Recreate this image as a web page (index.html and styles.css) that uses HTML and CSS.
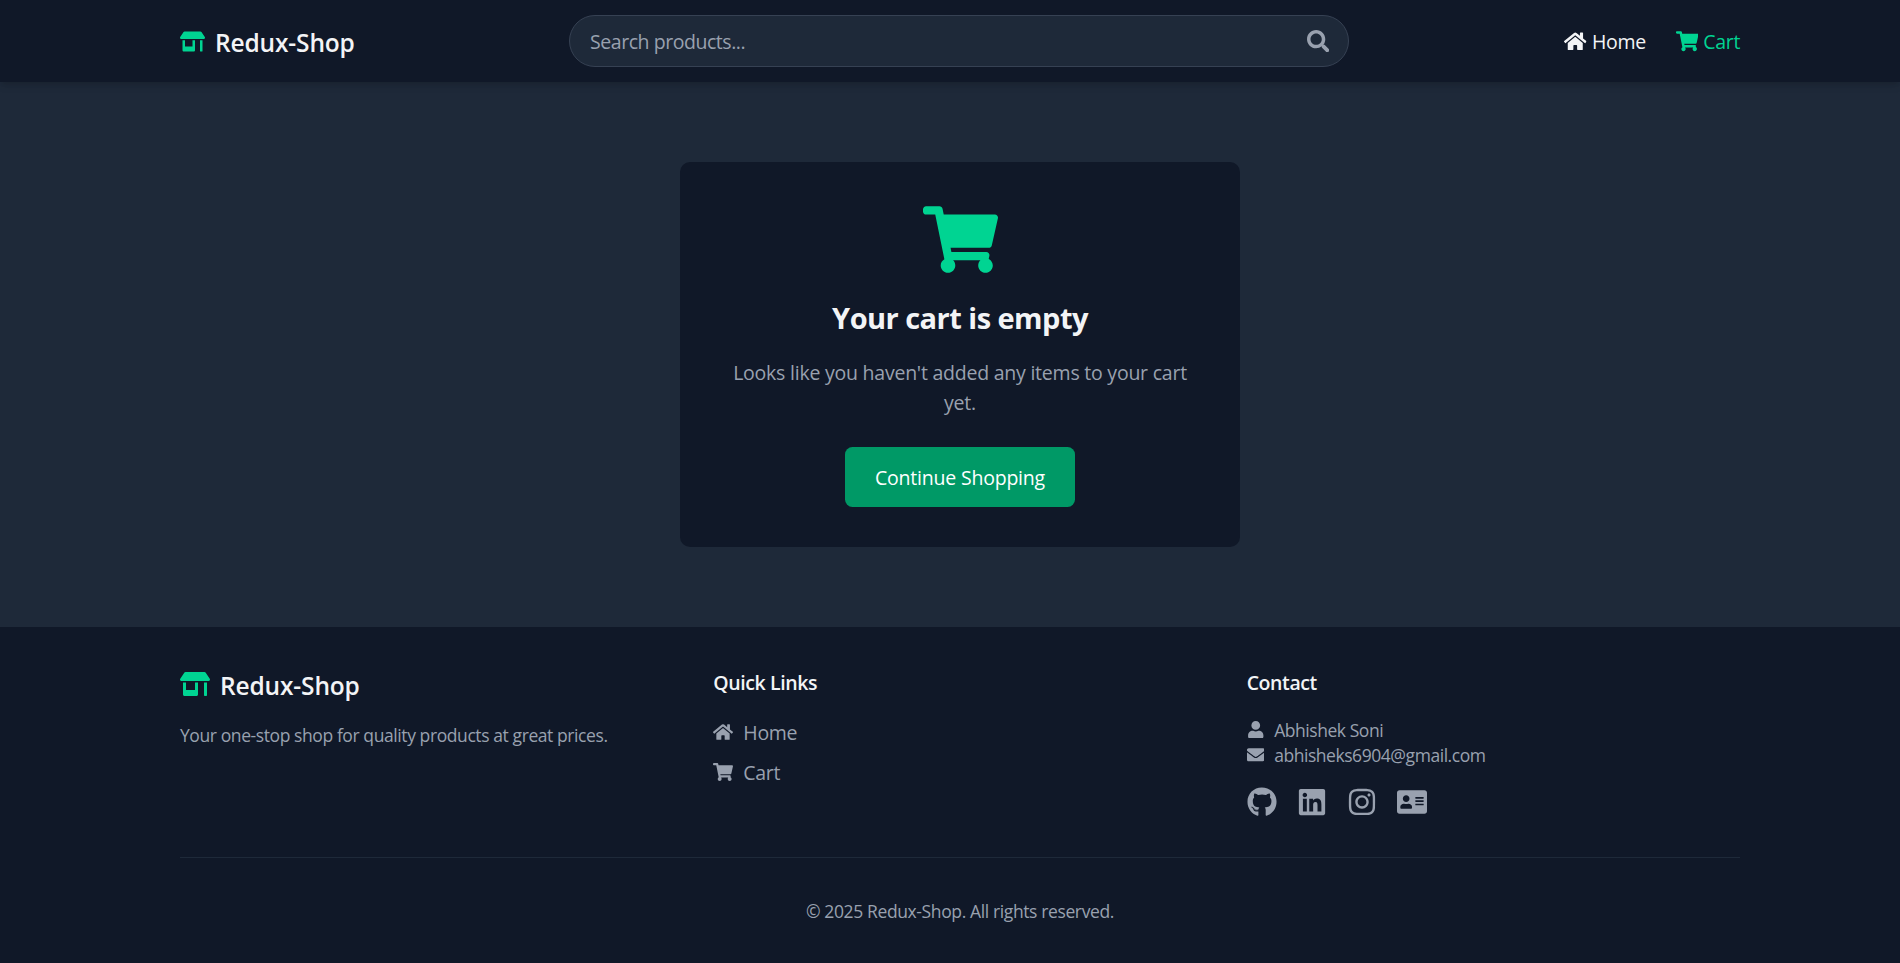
FILE: index.html
```html
<!DOCTYPE html>
<html lang="en">
<head>
<meta charset="utf-8">
<title>Redux-Shop</title>
<link rel="stylesheet" href="styles.css">
</head>
<body>
<svg class="sprite" aria-hidden="true">
  <symbol id="store" viewBox="0 0 640 512"><path d="M320 384H128V224H64v256c0 17.7 14.3 32 32 32h256c17.7 0 32-14.3 32-32V224h-64v160zm314.6-241.8l-85.3-128c-6-8.9-16-14.2-26.7-14.2H117.4c-10.7 0-20.7 5.3-26.6 14.2l-85.3 128c-14.2 21.3 1 49.8 26.6 49.8H608c25.5 0 40.7-28.5 26.6-49.8zM512 496c0 8.8 7.2 16 16 16h32c8.8 0 16-7.2 16-16V224h-64v272z"/></symbol>
  <symbol id="search" viewBox="0 0 512 512"><path d="M505 442.7L405.3 343c-4.5-4.5-10.6-7-17-7H372c27.6-35.3 44-79.7 44-128C416 93.1 322.9 0 208 0S0 93.1 0 208s93.1 208 208 208c48.3 0 92.7-16.4 128-44v16.3c0 6.4 2.5 12.5 7 17l99.7 99.7c9.4 9.4 24.6 9.4 33.9 0l28.3-28.3c9.4-9.4 9.4-24.6.1-34zM208 336c-70.7 0-128-57.2-128-128 0-70.7 57.2-128 128-128 70.7 0 128 57.2 128 128 0 70.7-57.2 128-128 128z"/></symbol>
  <symbol id="home" viewBox="0 0 576 512"><path d="M280.37 148.26L96 300.11V464a16 16 0 0 0 16 16l112.06-.29a16 16 0 0 0 15.92-16V368a16 16 0 0 1 16-16h64a16 16 0 0 1 16 16v95.64a16 16 0 0 0 16 16.05L464 480a16 16 0 0 0 16-16V300L295.67 148.26a12.19 12.19 0 0 0-15.3 0zM571.6 251.47L488 182.56V44.05a12 12 0 0 0-12-12h-56a12 12 0 0 0-12 12v72.61L318.47 43a48 48 0 0 0-61 0L4.34 251.47a12 12 0 0 0-1.6 16.9l25.5 31A12 12 0 0 0 45.15 301l235.22-193.74a12.19 12.19 0 0 1 15.3 0L530.9 301a12 12 0 0 0 16.9-1.6l25.5-31a12 12 0 0 0-1.7-16.93z"/></symbol>
  <symbol id="cart" viewBox="0 0 576 512"><path d="M528.12 301.319l47.273-208C578.806 78.301 567.391 64 551.99 64H159.208l-9.166-44.81C147.758 8.021 137.93 0 126.529 0H24C10.745 0 0 10.745 0 24v16c0 13.255 10.745 24 24 24h69.883l70.248 343.435C147.325 417.1 136 435.222 136 456c0 30.928 25.072 56 56 56s56-25.072 56-56c0-15.674-6.447-29.835-16.824-40h209.647C430.447 426.165 424 440.326 424 456c0 30.928 25.072 56 56 56s56-25.072 56-56c0-22.172-12.888-41.332-31.579-50.405l5.517-24.276c3.413-15.018-8.002-29.319-23.403-29.319H218.117l-6.545-32h293.145c11.206 0 20.92-7.754 23.403-18.681z"/></symbol>
  <symbol id="user" viewBox="0 0 448 512"><path d="M224 256c70.7 0 128-57.3 128-128S294.7 0 224 0 96 57.3 96 128s57.3 128 128 128zm89.6 32h-16.7c-22.2 10.2-46.9 16-72.9 16s-50.6-5.8-72.9-16h-16.7C60.2 288 0 348.2 0 422.4V464c0 26.5 21.5 48 48 48h352c26.5 0 48-21.5 48-48v-41.6c0-74.2-60.2-134.4-134.4-134.4z"/></symbol>
  <symbol id="envelope" viewBox="0 0 512 512"><path d="M502.3 190.8c3.9-3.1 9.7-.2 9.7 4.7V400c0 26.5-21.5 48-48 48H48c-26.5 0-48-21.5-48-48V195.6c0-5 5.7-7.8 9.7-4.7 22.4 17.4 52.1 39.5 154.1 113.6 21.1 15.4 56.7 47.8 92.2 47.6 35.7.3 72-32.8 92.3-47.6 102-74.1 131.6-96.3 154-113.7zM256 320c23.2.4 56.6-29.2 73.4-41.4 132.7-96.3 142.8-104.7 173.4-128.7 5.8-4.5 9.2-11.5 9.2-18.9v-19c0-26.5-21.5-48-48-48H48c-26.5 0-48 21.5-48 48v19c0 7.4 3.4 14.3 9.2 18.9 30.6 23.9 40.7 32.4 173.4 128.7 16.8 12.2 50.2 41.8 73.4 41.4z"/></symbol>
  <symbol id="github" viewBox="0 0 496 512"><path d="M165.9 397.4c0 2-2.3 3.6-5.2 3.6-3.3.3-5.6-1.3-5.6-3.6 0-2 2.3-3.6 5.2-3.6 3-.3 5.6 1.3 5.6 3.6zm-31.1-4.5c-.7 2 1.3 4.3 4.3 4.9 2.6 1 5.6 0 6.2-2s-1.3-4.3-4.3-5.2c-2.6-.7-5.5.3-6.2 2.3zm44.2-1.7c-2.9.7-4.9 2.6-4.6 4.9.3 2 2.9 3.3 5.9 2.6 2.9-.7 4.9-2.6 4.6-4.6-.3-1.9-3-3.2-5.9-2.9zM244.8 8C106.1 8 0 113.3 0 252c0 110.9 69.8 205.8 169.5 239.2 12.8 2.3 17.3-5.6 17.3-12.1 0-6.2-.3-40.4-.3-61.4 0 0-70 15-84.7-29.8 0 0-11.4-29.1-27.8-36.6 0 0-22.9-15.7 1.6-15.4 0 0 24.9 2 38.6 25.8 21.9 38.6 58.6 27.5 72.9 20.9 2.3-16 8.8-27.1 16-33.7-55.9-6.2-112.3-14.3-112.3-110.5 0-27.5 7.6-41.3 23.6-58.9-2.6-6.5-11.1-33.3 2.6-67.9 20.9-6.5 69 27 69 27 20-5.6 41.5-8.5 62.8-8.5s42.8 2.9 62.8 8.5c0 0 48.1-33.6 69-27 13.7 34.7 5.2 61.4 2.6 67.9 16 17.7 25.8 31.5 25.8 58.9 0 96.5-58.9 104.2-114.8 110.5 9.2 7.9 17 22.9 17 46.4 0 33.7-.3 75.4-.3 83.6 0 6.5 4.6 14.4 17.3 12.1C428.2 457.8 496 362.9 496 252 496 113.3 383.5 8 244.8 8zM97.2 352.9c-1.3 1-1 3.3.7 5.2 1.6 1.6 3.9 2.3 5.2 1 1.3-1 1-3.3-.7-5.2-1.6-1.6-3.9-2.3-5.2-1zm-10.8-8.1c-.7 1.3.3 2.9 2.3 3.9 1.6 1 3.6.7 4.3-.7.7-1.3-.3-2.9-2.3-3.9-2-.6-3.6-.3-4.3.7zm32.4 35.6c-1.6 1.3-1 4.3 1.3 6.2 2.3 2.3 5.2 2.6 6.5 1 1.3-1.3.7-4.3-1.3-6.2-2.2-2.3-5.2-2.6-6.5-1zm-11.4-14.7c-1.6 1-1.6 3.6 0 5.9 1.6 2.3 4.3 3.3 5.6 2.3 1.6-1.3 1.6-3.9 0-6.2-1.4-2.3-4-3.3-5.6-2z"/></symbol>
  <symbol id="linkedin" viewBox="0 0 448 512"><path d="M416 32H31.9C14.3 32 0 46.5 0 64.3v383.4C0 465.5 14.3 480 31.9 480H416c17.6 0 32-14.5 32-32.3V64.3c0-17.8-14.4-32.3-32-32.3zM135.4 416H69V202.2h66.5V416zm-33.2-243c-21.3 0-38.5-17.3-38.5-38.5S80.9 96 102.2 96c21.2 0 38.5 17.3 38.5 38.5 0 21.3-17.2 38.5-38.5 38.5zm282.1 243h-66.4V312c0-24.8-.5-56.7-34.5-56.7-34.6 0-39.9 27-39.9 54.9V416h-66.4V202.2h63.7v29.2h.9c8.9-16.8 30.6-34.5 62.9-34.5 67.2 0 79.7 44.3 79.7 101.9V416z"/></symbol>
  <symbol id="instagram" viewBox="0 0 448 512"><path d="M224.1 141c-63.6 0-114.9 51.3-114.9 114.9s51.3 114.9 114.9 114.9S339 319.5 339 255.9 287.7 141 224.1 141zm0 189.6c-41.1 0-74.7-33.5-74.7-74.7s33.5-74.7 74.7-74.7 74.7 33.5 74.7 74.7-33.6 74.7-74.7 74.7zm146.4-194.3c0 14.9-12 26.8-26.8 26.8-14.9 0-26.8-12-26.8-26.8s12-26.8 26.8-26.8 26.8 12 26.8 26.8zm76.1 27.2c-1.7-35.9-9.9-67.7-36.2-93.9-26.2-26.2-58-34.4-93.9-36.2-37-2.1-147.9-2.1-184.9 0-35.8 1.7-67.6 9.9-93.9 36.1s-34.4 58-36.2 93.9c-2.1 37-2.1 147.9 0 184.9 1.7 35.9 9.9 67.7 36.2 93.9s58 34.4 93.9 36.2c37 2.1 147.9 2.1 184.9 0 35.9-1.7 67.7-9.9 93.9-36.2 26.2-26.2 34.4-58 36.2-93.9 2.1-37 2.1-147.8 0-184.8zM398.8 388c-7.8 19.6-22.9 34.7-42.6 42.6-29.5 11.7-99.5 9-132.1 9s-102.7 2.6-132.1-9c-19.6-7.8-34.7-22.9-42.6-42.6-11.7-29.5-9-99.5-9-132.1s-2.6-102.7 9-132.1c7.8-19.6 22.9-34.7 42.6-42.6 29.5-11.7 99.5-9 132.1-9s102.7-2.6 132.1 9c19.6 7.8 34.7 22.9 42.6 42.6 11.7 29.5 9 99.5 9 132.1s2.7 102.7-9 132.1z"/></symbol>
  <symbol id="address-card" viewBox="0 0 576 512"><path d="M528 32H48C21.5 32 0 53.5 0 80v352c0 26.5 21.5 48 48 48h480c26.5 0 48-21.5 48-48V80c0-26.5-21.5-48-48-48zm-352 96c35.3 0 64 28.7 64 64s-28.7 64-64 64-64-28.7-64-64 28.7-64 64-64zm112 236.8c0 10.6-10 19.2-22.4 19.2H86.4C74 384 64 375.4 64 364.8v-19.2c0-31.8 30.1-57.6 67.2-57.6h5c12.3 5.1 25.7 8 39.8 8s27.6-2.9 39.8-8h5c37.1 0 67.2 25.8 67.2 57.6v19.2zM512 312c0 4.4-3.6 8-8 8H360c-4.4 0-8-3.6-8-8v-16c0-4.4 3.6-8 8-8h144c4.4 0 8 3.6 8 8v16zm0-64c0 4.4-3.6 8-8 8H360c-4.4 0-8-3.6-8-8v-16c0-4.4 3.6-8 8-8h144c4.4 0 8 3.6 8 8v16zm0-64c0 4.4-3.6 8-8 8H360c-4.4 0-8-3.6-8-8v-16c0-4.4 3.6-8 8-8h144c4.4 0 8 3.6 8 8v16z"/></symbol>
</svg>

<header class="header">
  <div class="container header-row">
    <a class="brand"><svg class="icon icon-brand"><use href="#store"/></svg><span class="brand-name">Redux-Shop</span></a>
    <div class="search"><span class="search-hint">Search products...</span><svg class="icon icon-search"><use href="#search"/></svg></div>
    <nav class="nav">
      <a class="nav-link"><svg class="icon icon-nav"><use href="#home"/></svg><span class="label">Home</span></a>
      <a class="nav-link nav-link-active"><svg class="icon icon-nav"><use href="#cart"/></svg><span class="label">Cart</span></a>
    </nav>
  </div>
</header>

<main class="main">
  <section class="card">
    <svg class="icon icon-empty"><use href="#cart"/></svg>
    <h2 class="card-title">Your cart is empty</h2>
    <p class="card-text">Looks like you haven't added any items to your cart yet.</p>
    <a class="button">Continue Shopping</a>
  </section>
</main>

<footer class="footer">
  <div class="container">
    <div class="footer-grid">
      <div>
        <div class="footer-brand"><svg class="icon icon-footer-brand"><use href="#store"/></svg><span class="brand-name">Redux-Shop</span></div>
        <p class="tagline">Your one-stop shop for quality products at great prices.</p>
      </div>
      <div>
        <h3 class="footer-title">Quick Links</h3>
        <ul class="links">
          <li class="link"><svg class="icon icon-link"><use href="#home"/></svg><span class="label">Home</span></li>
          <li class="link"><svg class="icon icon-link"><use href="#cart"/></svg><span class="label">Cart</span></li>
        </ul>
      </div>
      <div>
        <h3 class="footer-title">Contact</h3>
        <div class="contact">
          <div class="contact-row"><svg class="icon icon-contact"><use href="#user"/></svg><span class="contact-text">Abhishek Soni</span></div>
          <div class="contact-row"><svg class="icon icon-contact"><use href="#envelope"/></svg><span class="contact-text">abhisheks6904@gmail.com</span></div>
        </div>
        <div class="socials">
          <svg class="icon icon-social"><use href="#github"/></svg>
          <svg class="icon icon-social"><use href="#linkedin"/></svg>
          <svg class="icon icon-social"><use href="#instagram"/></svg>
          <svg class="icon icon-social"><use href="#address-card"/></svg>
        </div>
      </div>
    </div>
    <div class="copyright">© 2025 Redux-Shop. All rights reserved.</div>
  </div>
</footer>
</body>
</html>
```
FILE: styles.css
```css
* { box-sizing: border-box; margin: 0; padding: 0; }
html, body { height: 100%; }
body {
  display: flex;
  flex-direction: column;
  overflow: hidden;
  background: #101828;
  color: #f3f4f6;
  font: 19.5px/30px "Open Sans", "Noto Sans", sans-serif;
}
.sprite { position: absolute; width: 0; height: 0; }
.icon { display: block; flex: none; fill: currentColor; }
.container { width: 1560px; margin-left: 180px; }
.label { padding-top: 2px; line-height: 28px; letter-spacing: -.33px; }

.header {
  height: 82px;
  background: #101828;
  box-shadow: 0 5px 8px -1px rgba(0, 0, 0, .1), 0 3px 5px -2px rgba(0, 0, 0, .1);
  z-index: 1;
}
.header-row { display: grid; grid-template-columns: 389px 780px 1fr; align-items: center; height: 82px; }
.brand { display: flex; align-items: center; gap: 10px; }
.icon-brand { width: 25px; height: 25px; color: #00d492; }
.brand-name { padding-top: 2px; font-size: 24.5px; font-weight: 600; line-height: 33px; letter-spacing: -.15px; }
.search {
  display: flex;
  align-items: center;
  justify-content: space-between;
  height: 52px;
  padding: 0 19px 0 20px;
  border: 1px solid #364153;
  border-radius: 26px;
  background: #1e2939;
  color: #99a1af;
}
.search-hint { padding-top: 2px; line-height: 28px; letter-spacing: -.45px; }
.icon-search { width: 22.5px; height: 22.5px; }
.nav { display: flex; justify-content: flex-end; gap: 30px; }
.nav-link { display: flex; align-items: center; gap: 5px; }
.nav-link-active { color: #00d492; }
.icon-nav { width: 22.5px; height: 22.5px; }

.main { height: 545px; padding: 80px 0 0 680px; background: #1e2939; }
.card {
  display: flex;
  flex-direction: column;
  align-items: center;
  width: 560px;
  height: 385px;
  padding: 40px;
  border-radius: 10px;
  background: #101828;
  text-align: center;
}
.icon-empty { width: 75px; height: 75px; color: #00d492; }
.card-title { margin-top: 21px; font-size: 29px; font-weight: 700; line-height: 40px; letter-spacing: -.53px; }
.card-text { margin-top: 20px; color: #99a1af; letter-spacing: -.23px; }
.button {
  width: 230px;
  height: 60px;
  margin-top: 29px;
  padding-top: 16px;
  border-radius: 7.5px;
  background: #009966;
  color: #fff;
  letter-spacing: -.21px;
}

.footer { flex: 1; padding-top: 40px; background: #101828; }
.footer-grid { display: grid; grid-template-columns: repeat(3, 1fr); gap: 40px; height: 190px; color: #99a1af; }
.footer-brand { display: flex; align-items: center; gap: 10px; height: 34px; color: #f3f4f6; }
.icon-footer-brand { width: 30px; height: 30px; color: #00d492; }
.tagline { margin-top: 22px; font-size: 17.5px; line-height: 25px; letter-spacing: -.41px; }
.footer-title { padding-top: 2px; color: #f3f4f6; font-size: 19.5px; font-weight: 600; line-height: 28px; letter-spacing: -.4px; }
.links { display: flex; flex-direction: column; gap: 10px; margin-top: 20px; list-style: none; }
.link { display: flex; align-items: center; gap: 10px; }
.icon-link { width: 20px; height: 20px; }
.contact { margin-top: 20px; font-size: 17.5px; }
.contact-row { display: flex; align-items: center; gap: 10px; }
.contact-text { padding-top: 2px; line-height: 23px; letter-spacing: -.45px; }
.icon-contact { width: 17.5px; height: 17.5px; }
.socials { display: flex; gap: 20px; margin-top: 20px; }
.icon-social { width: 30px; height: 30px; }
.copyright {
  padding-top: 41px;
  border-top: 1px solid #1e2939;
  color: #99a1af;
  font-size: 17.5px;
  line-height: 25px;
  letter-spacing: -.38px;
  text-align: center;
}
```
